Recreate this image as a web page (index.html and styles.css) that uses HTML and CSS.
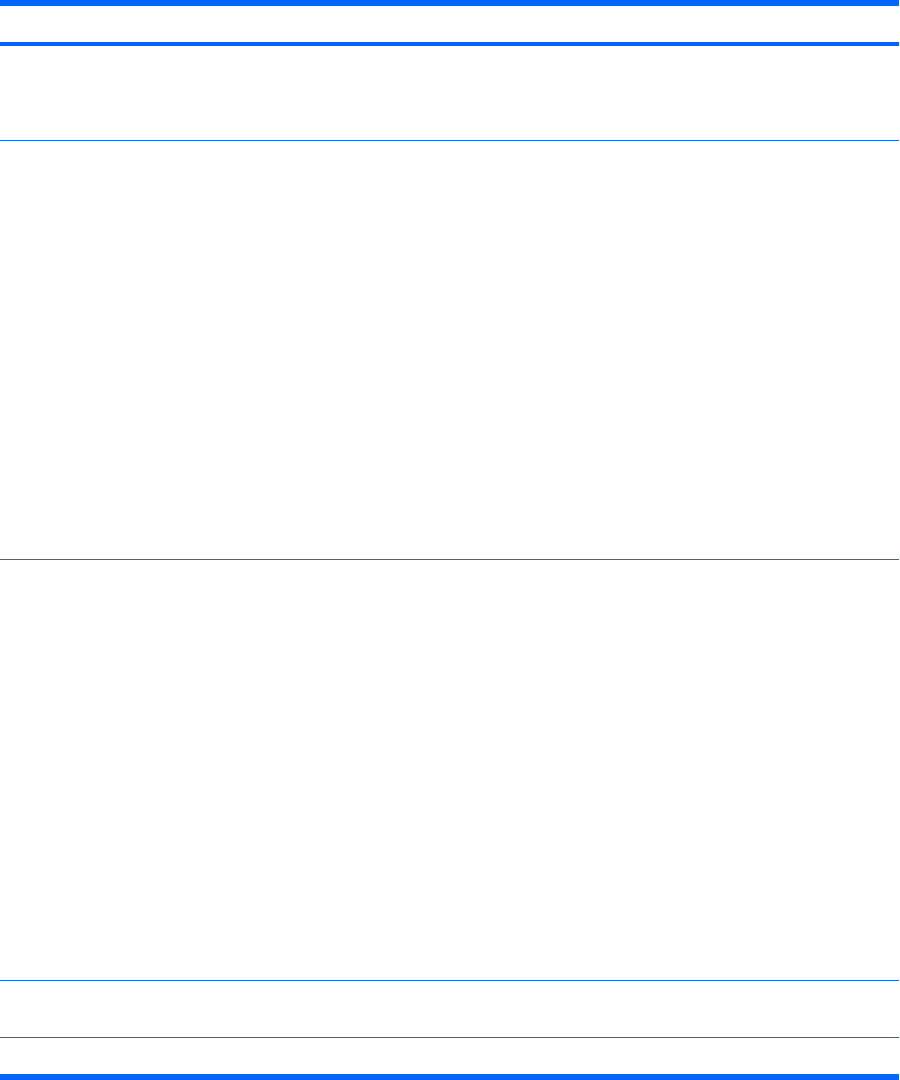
FILE: index.html
```html
<!DOCTYPE html>
<html lang="en">
<head>
  <meta charset="UTF-8" />
  <title>Table</title>
  <link rel="stylesheet" href="styles.css">
</head>
<body>
  <div class="spec-table">
    <div class="row head-row"><div class="cell"></div><div class="cell"></div></div>
    <div class="row row-1"><div class="cell"></div><div class="cell"></div></div>
    <div class="row row-2"><div class="cell"></div><div class="cell"></div></div>
    <div class="row row-3"><div class="cell"></div><div class="cell"></div></div>
    <div class="row row-4"><div class="cell"></div><div class="cell"></div></div>
    <div class="row row-5 last"><div class="cell"></div><div class="cell"></div></div>
  </div>
</body>
</html>
```

FILE: styles.css
```css
body {
  margin: 0;
  font-family: 'Liberation Sans', Arial, sans-serif;
  background: #ffffff;
}

.spec-table {
  width: 899px;
  border-top: 6px solid #0066ff;
  border-bottom: 6px solid #0066ff;
}

.row {
  display: grid;
  grid-template-columns: 1fr 1fr;
  border-bottom: 1px solid #1469e6;
}

.row.last {
  border-bottom: none;
}

.head-row {
  height: 36px;
  border-bottom: 4px solid #0066ff;
}

.row-1 { height: 94px; }
.row-2 { height: 418px; }
.row-3 { height: 420px; }
.row-4 { height: 56px; }
.row-5 { height: 36px; }
```
